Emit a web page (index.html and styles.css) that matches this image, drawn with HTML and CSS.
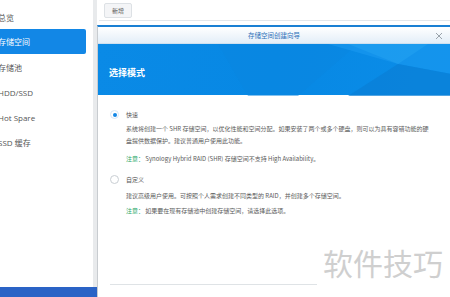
FILE: index.html
```html
<!DOCTYPE html>
<html lang="zh">
<head>
<meta charset="utf-8">
<link rel="stylesheet" href="styles.css">
</head>
<body>
<div class="app">
  <div class="leftcol">
    <nav class="sidebar">
      <div class="item">总览</div>
      <div class="item active">存储空间</div>
      <div class="item">存储池</div>
      <div class="item">HDD/SSD</div>
      <div class="item">Hot Spare</div>
      <div class="item">SSD 缓存</div>
    </nav>
    <div class="taskbar"></div>
  </div>
  <div class="main">
    <div class="toolbar"><button class="btn">新增</button></div>
    <div class="dialog">
      <div class="titlebar">
        <span class="title">存储空间创建向导</span>
        <svg class="close" width="8" height="8" viewBox="0 0 8 8"><path d="M1 1L7 7M7 1L1 7" stroke="#9aa3ab" stroke-width="1"/></svg>
      </div>
      <div class="banner">
        <svg class="poly" width="353" height="52" viewBox="0 0 353 52" preserveAspectRatio="none">
          <polygon points="120,0 260,0 200,52 150,52" fill="#0a86e0" opacity="0.5"/>
          <polygon points="230,0 353,0 353,30 300,20" fill="#1b9af0" opacity="0.6"/>
          <polygon points="300,20 353,30 353,52 250,52" fill="#0a7fd6" opacity="0.7"/>
          <polygon points="250,0 330,0 300,20" fill="#23a3f2" opacity="0.5"/>
        </svg>
        <h1>选择模式</h1>
      </div>
      <div class="body">
        <div class="option">
          <div class="row"><span class="radio checked"></span><span class="label">快速</span></div>
          <p class="desc">系统将创建一个 SHR 存储空间，以优化性能和空间分配。如果安装了两个或多个硬盘，则可以为具有容错功能的硬<br>盘提供数据保护。建议普通用户使用此功能。</p>
          <p class="note"><span class="warn">注意：</span> Synology Hybrid RAID (SHR) 存储空间不支持 High Availability。</p>
        </div>
        <div class="option second">
          <div class="row"><span class="radio"></span><span class="label">自定义</span></div>
          <p class="desc">建议高级用户使用。可按照个人需求创建不同类型的 RAID，并创建多个存储空间。</p>
          <p class="note"><span class="warn">注意：</span> 如果要在现有存储池中创建存储空间，请选择此选项。</p>
        </div>
        <div class="footer">
          <div class="rule"></div>
          <div class="watermark">软件技巧</div>
        </div>
      </div>
    </div>
  </div>
</div>
</body>
</html>
```
FILE: styles.css
```css
* { box-sizing: border-box; }
html, body { margin: 0; padding: 0; }
body {
  width: 450px;
  height: 297px;
  overflow: hidden;
  background: #fff;
  font-family: "Noto Sans CJK SC", "Liberation Sans", sans-serif;
  color: #444;
}
.app { display: flex; height: 297px; }
.leftcol { width: 97px; display: flex; flex-direction: column; }
.sidebar {
  flex: 1;
  border-right: 4px solid #e8eaec;
  padding-top: 10px;
  display: flex;
  flex-direction: column;
}
.item {
  height: 25px;
  line-height: 15px;
  padding: 6px 0 4px 0;
  margin-left: -2px;
  width: 88px;
  font-size: 8px;
  color: #555;
  font-family: "Open Sans", "Noto Sans CJK SC", sans-serif;
}
.sidebar .item:first-child { height: 19px; padding-top: 0; }
.item.active {
  background: #1287e6;
  color: #fff;
  border-radius: 0 2px 2px 0;
  padding-top: 5px;
}
.taskbar { height: 10px; background: #2a63c6; }
.main { flex: 1; display: flex; flex-direction: column; min-width: 0; }
.toolbar {
  display: flex;
  align-items: flex-start;
  height: 21px;
  padding: 3px 0 0 5px;
  border-bottom: 1px solid #e3e6ea;
  margin-left: 2px;
}
.btn {
  height: 15px;
  width: 28px;
  padding: 0;
  border: 1px solid #dde1e5;
  border-radius: 2px;
  background: #f4f5f7;
  font-size: 6px;
  color: #555;
  font-family: "Noto Sans CJK SC", sans-serif;
}
.dialog {
  margin-top: 4px;
  flex: 1;
  border-top: 2px solid #1a7fd3;
  border-left: 1px solid #c8ccd0;
  display: flex;
  flex-direction: column;
}
.titlebar {
  height: 17px;
  background: linear-gradient(#ffffff, #e3eef8);
  display: flex;
  align-items: center;
  justify-content: center;
  position: relative;
  border-bottom: 1px solid #cfe0ef;
}
.title { font-size: 6.5px; color: #2b6fb8; }
.close { position: absolute; right: 7px; top: 5px; }
.banner {
  height: 51px;
  background: linear-gradient(100deg, #0a8ae6 0%, #0788e4 50%, #0b8de8 100%);
  position: relative;
  display: flex;
  align-items: center;
  padding-left: 11px;
}
.poly { position: absolute; left: 0; top: 0; }
.banner h1 {
  position: relative;
  margin: 0;
  font-size: 9px;
  font-weight: bold;
  color: #fff;
  padding-top: 6px;
}
.body { flex: 1; padding: 15px 0 0 12px; display: flex; flex-direction: column; }
.option { display: flex; flex-direction: column; }
.option.second { margin-top: 10px; }
.row { display: flex; align-items: center; height: 9px; gap: 7px; }
.radio {
  width: 9px; height: 9px;
  border: 1px solid #c9ced3;
  border-radius: 50%;
  background: #fff;
  position: relative;
}
.radio.checked { border-color: #d4e6f7; }
.radio.checked::after {
  content: "";
  position: absolute;
  left: 1.5px; top: 1.5px;
  width: 4px; height: 4px;
  border-radius: 50%;
  background: #1287e6;
}
.label { font-size: 6px; color: #555; }
.desc {
  margin: 4px 0 0 16px;
  font-size: 6px;
  line-height: 12px;
  color: #5a5a5a;
}
.note {
  margin: 6px 0 0 16px;
  font-size: 6px;
  line-height: 12px;
  color: #5a5a5a;
}
.second .desc { margin-top: 6px; }
.second .note { margin-top: 3px; }
.warn { color: #2aa868; }
.footer {
  margin-top: auto;
  display: flex;
  align-items: flex-end;
  padding-bottom: 12px;
}
.rule { width: 207px; height: 1px; background: #dfe3e6; }
.watermark {
  font-size: 30px;
  line-height: 30px;
  color: #cfcfcf;
  margin-left: 6px;
  margin-bottom: 8px;
}
```
